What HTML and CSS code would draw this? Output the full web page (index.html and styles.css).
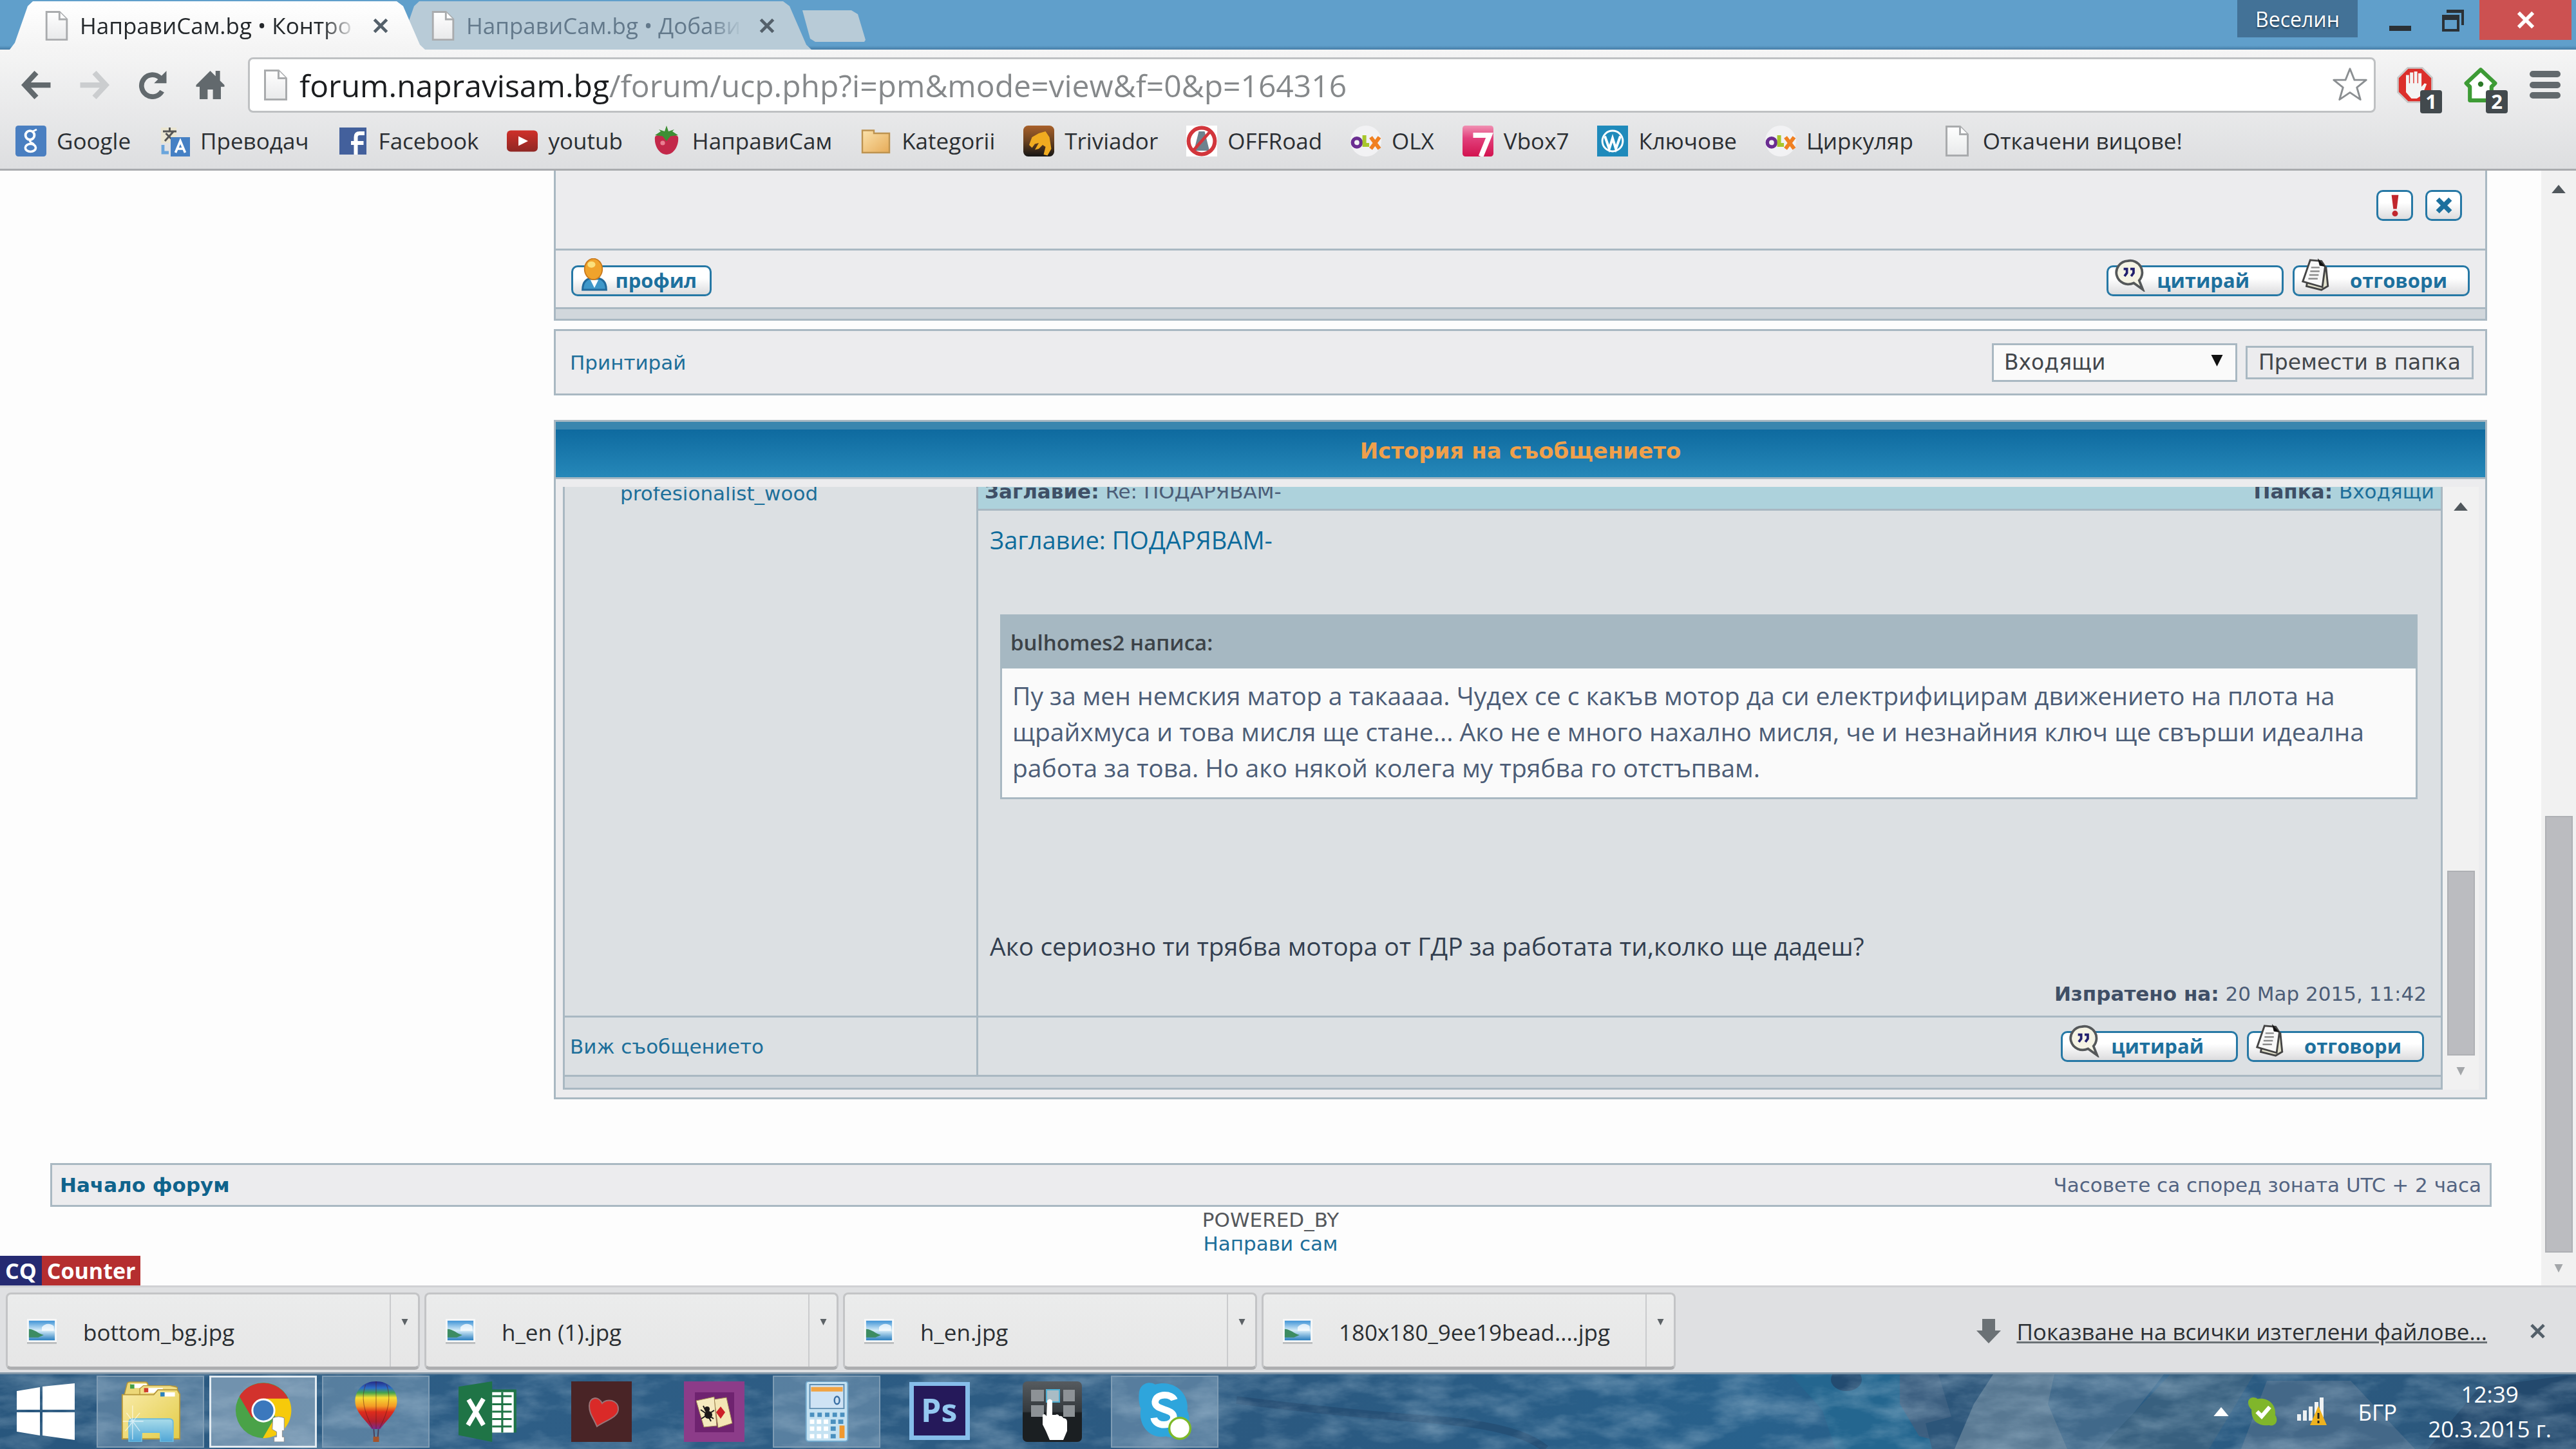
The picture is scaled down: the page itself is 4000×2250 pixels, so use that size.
FILE: index.html
```html
<!DOCTYPE html>
<html lang="bg">
  <head>
    <meta charset="UTF-8" />
    <meta name="viewport" content="width=device-width, initial-scale=1.0" />
    <title>НаправиСам.bg • Контролен панел</title>
    <link rel="stylesheet" href="styles.css">
  </head>
  <body>
    <!-- shared icons -->
    <svg class="defs" width="0" height="0" aria-hidden="true">
      <defs>
        <linearGradient id="gPaper" x1="0" y1="0" x2="0" y2="1"><stop offset="0" stop-color="#fff" /><stop offset="1" stop-color="#e8e9ea" /></linearGradient>
        <linearGradient id="gSky" x1="0" y1="0" x2="0" y2="1"><stop offset="0" stop-color="#3f93d6" /><stop offset="0.5" stop-color="#d5ecf8" /><stop offset="1" stop-color="#2a7fc0" /></linearGradient>
        <linearGradient id="gFolder" x1="0" y1="0" x2="1" y2="1"><stop offset="0" stop-color="#fbe2ab" /><stop offset="1" stop-color="#e6ab58" /></linearGradient>
        <linearGradient id="gYellow" x1="0" y1="0" x2="1" y2="1"><stop offset="0" stop-color="#f9ebaa" /><stop offset="1" stop-color="#e3cc47" /></linearGradient>
        <linearGradient id="gGlass" x1="0" y1="0" x2="0" y2="1"><stop offset="0" stop-color="#a9dcea" /><stop offset="1" stop-color="#4fa5d6" /></linearGradient>
        <linearGradient id="gBalloon" x1="0" y1="0" x2="0" y2="1"><stop offset="0" stop-color="#232a86" /><stop offset="0.14" stop-color="#2c6cc4" /><stop offset="0.24" stop-color="#46a34b" /><stop offset="0.34" stop-color="#f6dd35" /><stop offset="0.52" stop-color="#f39a25" /><stop offset="0.64" stop-color="#dd2c1c" /><stop offset="0.84" stop-color="#b3202f" /><stop offset="1" stop-color="#7a2a91" /></linearGradient>
        <linearGradient id="gVbox" x1="0" y1="0" x2="0" y2="1"><stop offset="0" stop-color="#f091b3" /><stop offset="0.4" stop-color="#e2407c" /><stop offset="1" stop-color="#d2134f" /></linearGradient>
        <linearGradient id="gTriv" x1="0" y1="0" x2="0" y2="1"><stop offset="0" stop-color="#a8602a" /><stop offset="0.5" stop-color="#6b4321" /><stop offset="1" stop-color="#151515" /></linearGradient>
        <linearGradient id="gTube" x1="0" y1="0" x2="0" y2="1"><stop offset="0" stop-color="#cf3029" /><stop offset="1" stop-color="#8f2724" /></linearGradient>
        <linearGradient id="gKeys" x1="0" y1="0" x2="0" y2="1"><stop offset="0" stop-color="#565b5f" /><stop offset="0.5" stop-color="#33383c" /><stop offset="0.52" stop-color="#1b1f22" /><stop offset="1" stop-color="#1b1f22" /></linearGradient>
      </defs>
      <symbol id="i-page" viewBox="0 0 12 16"><path d="M.5.5h7l4 4v11H.5z" fill="url(#gPaper)" stroke="#a9abad" /><path d="M7.5.5v4h4" fill="#fff" stroke="#a9abad" /></symbol>
      <symbol id="i-photo" viewBox="0 0 16 14"><path d="M0 0h16v13.5H0z" fill="#b9bbbd" /><path d="M0 0h16v12.6H0z" fill="#f7f8f8" /><path d="M1 1h14v10.6H1z" fill="url(#gSky)" /><path d="M1 5.5c3 0 5 2.500 8 3.200L6 10H1z" fill="#3d8c62" /><path d="M8 4.500c2-2.500 5-2 6.500-.5v2.500H8z" fill="#fff" opacity=".75" /></symbol>
      <symbol id="i-x" viewBox="0 0 10 10"><path d="M1 1l8 8M9 1L1 9" stroke="currentColor" stroke-width="2" fill="none" /></symbol>
      <symbol id="i-down" viewBox="0 0 10 10"><path d="M0 0h10L5 10z" fill="currentColor" /></symbol>
      <symbol id="i-up" viewBox="0 0 10 6"><path d="M0 6h10L5 0z" fill="currentColor" /></symbol>
      <symbol id="i-olx" viewBox="0 0 16 16"><circle cx="8" cy="8" r="8" fill="#f2f2f4" /><circle cx="3.300" cy="8.800" r="2.200" fill="none" stroke="#6a2d91" stroke-width="1.800" /><path d="M7.200 5v5h2.500" fill="none" stroke="#a8c62c" stroke-width="2" /><path d="M10.500 6l4.500 6M15 6l-4.500 6" stroke="#f08021" stroke-width="2" /></symbol>
      <symbol id="i-quote" viewBox="0 0 16 16"><path d="M7 1a6 5.800 0 1 0 3 11l4.500 3.200-1.800-4.500A5.900 5.900 0 0 0 7 1z" fill="#f5f3e4" stroke="#55585a" stroke-width="1.200" /><path d="M5 5h1.600v2L5.400 8.600M8.300 5h1.600v2L8.700 8.600" fill="none" stroke="#22206e" stroke-width="1.200" /></symbol>
      <symbol id="i-reply" viewBox="0 0 16 18"><path d="M5 3.500l8.500 1.500 1 10-3.500 2-8-2z" fill="#e3e2cd" stroke="#444" stroke-width="1" /><path d="M5 1l6 .5 2 3-1.500 11L1 12.500z" fill="#f8f8f8" stroke="#444" stroke-width="1" /><path d="M9 0l4 4.500-3-.5z" fill="#111" /><path d="M5.500 5h4.500M5 7h5M4.500 9h5M4 11h5" stroke="#8b8b8b" stroke-width=".8" /></symbol>
      <symbol id="i-user" viewBox="0 0 12 17"><path d="M0 16c0-4 2-6 6-6s6 2 6 6z" fill="#3f97c9" stroke="#226a9c" /><path d="M4 11l2 4 2-4z" fill="#fff" /><ellipse cx="5.500" cy="5.500" rx="4.500" ry="5.300" fill="#f0a32c" stroke="#c9791d" stroke-width=".6" /><ellipse cx="4.500" cy="3.200" rx="2" ry="1.600" fill="#fbe07c" /></symbol>
    </svg>

    <header class="titlebar">
      <nav class="tabs">
        <div class="tab tab-active">
          <svg class="tab-icon"><use href="#i-page" /></svg>
          <span class="tab-title">НаправиСам.bg • Контро</span>
          <button class="tab-close" aria-label="Затвори"><svg><use href="#i-x" /></svg></button>
        </div>
        <div class="tab">
          <svg class="tab-icon"><use href="#i-page" /></svg>
          <span class="tab-title">НаправиСам.bg • Добави</span>
          <button class="tab-close" aria-label="Затвори"><svg><use href="#i-x" /></svg></button>
        </div>
        <button class="new-tab" aria-label="Нов раздел"></button>
      </nav>
      <div class="window-controls">
        <button class="user-tag">Веселин</button>
        <button class="win-btn" aria-label="Минимизиране"><svg viewBox="0 0 36 36"><path d="M1 26h34v8H1z" fill="#2b3136" /></svg></button>
        <button class="win-btn" aria-label="Възстановяване"><svg viewBox="0 0 36 36"><path d="M8 1h27v24h-4V6H8z" fill="#2b3136" /><path d="M1 9h27v26H1zM5 17v14h19V17z" fill="#2b3136" fill-rule="evenodd" /></svg></button>
        <button class="win-close" aria-label="Затваряне"><svg><use href="#i-x" /></svg></button>
      </div>
    </header>

    <div class="toolbar">
      <div class="nav-row">
        <button class="nav-btn" aria-label="Назад"><svg viewBox="0 0 18 16"><path d="M9 1L2.500 8 9 15M3 8h14" fill="none" stroke="#62696d" stroke-width="3" /></svg></button>
        <button class="nav-btn" aria-label="Напред"><svg viewBox="0 0 18 16"><path d="M9 1l6.500 7L9 15M15 8H1" fill="none" stroke="#cbcdcf" stroke-width="3" /></svg></button>
        <button class="nav-btn" aria-label="Презареждане"><svg viewBox="0 0 18 16"><path d="M14.500 11.500A6.200 6.200 0 1 1 13.500 4" fill="none" stroke="#62696d" stroke-width="2.800" /><path d="M17 0v7h-7z" fill="#62696d" /></svg></button>
        <button class="nav-btn" aria-label="Начало"><svg viewBox="0 0 18 16"><path d="M9 0l3 3V0h2.500v5.500L17 8v1h-2v7h-4.500v-5.500h-3V16H3V9H1V8z" fill="#62696d" /></svg></button>
        <div class="omnibox">
          <svg class="omni-page"><use href="#i-page" /></svg>
          <input class="url" type="text" aria-label="Адрес" value="forum.napravisam.bg/forum/ucp.php?i=pm&amp;mode=view&amp;f=0&amp;p=164316" />
          <button class="star" aria-label="Отметка"><svg viewBox="0 0 20 20"><path d="M10 1.300l2.400 6h6.300l-5 4 1.900 6.500L10 14l-5.600 3.800 1.900-6.500-5-4h6.300z" fill="#fff" stroke="#8b8f92" stroke-width="1" stroke-linejoin="round" /></svg></button>
        </div>
        <button class="ext" aria-label="AdBlock"><svg viewBox="0 0 20 20"><path d="M6 .5h8L19.500 6v8L14 19.500H6L.5 14V6z" fill="#dc2f2b" stroke="#c9c9c9" /><path d="M5 10V4.500h1.700V9h.5V3h1.800v6h.5V2.500h1.800V9h.5V3.500h1.800V11l1.700-2 1.200.5-2.500 6L11 17.500H8L5 14z" fill="#f4f4f4" /></svg><span class="ext-badge">1</span></button>
        <button class="ext" aria-label="Известия"><svg viewBox="0 0 20 20"><path d="M10 1.500L18 9l-2 2v7.500H4V11L2 9z" fill="#fff" stroke="#3d9b35" stroke-width="2.200" stroke-linejoin="round" /><circle cx="10" cy="9.500" r="1.500" fill="#2c7a28" /></svg><span class="ext-badge">2</span></button>
        <button class="menu-btn" aria-label="Меню"><svg viewBox="0 0 48 44"><path d="M5 5h38M5 22h38M5 38h38" stroke="#62696d" stroke-width="10" stroke-linecap="round" /></svg></button>
      </div>

      <nav class="bookmarks">
        <a href="#"><svg viewBox="0 0 16 16"><rect width="16" height="16" rx="1.500" fill="#4a7fc1" /><circle cx="7.500" cy="5" r="2.300" fill="none" stroke="#fff" stroke-width="1.300" /><path d="M9 3l2-1M8 7.500c-1.500 1 1 1.500 1.500 2.200" stroke="#fff" fill="none" /><ellipse cx="7.800" cy="11.500" rx="2.700" ry="2" fill="none" stroke="#fff" stroke-width="1.200" /></svg>Google</a>
        <a href="#"><svg viewBox="0 0 16 16"><path d="M1 1h8v8H1z" fill="#ebe6d2" /><path d="M2 3h7M5.500 1v2M3 8l4.500-5M3.500 4l4 4" stroke="#555" fill="none" /><path d="M6 6h10v10H6z" fill="#4580c4" /><path d="M8.500 14L11 8l2.500 6M9.500 12h3" stroke="#fff" fill="none" stroke-width="1.200" /><path d="M2 10v4h3" stroke="#6aa5dc" fill="none" stroke-width="1.600" /></svg>Преводач</a>
        <a href="#"><svg viewBox="0 0 16 16"><path d="M1 1h14v14H1z" fill="#43609c" /><path d="M9.500 15V6q0-2 2-2H14M7 9h6.500" stroke="#fff" stroke-width="2" fill="none" /></svg>Facebook</a>
        <a href="#"><svg viewBox="0 0 16 16"><rect y="2.500" width="16" height="11" rx="2" fill="url(#gTube)" /><path d="M6 5.500l5 2.500-5 2.500z" fill="#fff" /></svg>youtub</a>
        <a href="#"><svg viewBox="0 0 16 16"><path d="M2 6c0-2 12-2 12 0 .5 4-2 9-6 9S1.500 10 2 6z" fill="#c3284a" /><path d="M2 5l3-2-1-1 3 1 1-3 1 3 3-1-1 1 3 2-4 .5L8 8 6 5.500z" fill="#3d8f34" /><circle cx="6" cy="9" r="1.200" fill="#ea7f92" /></svg>НаправиСам</a>
        <a href="#"><svg viewBox="0 0 16 16"><path d="M1 4V2.500h6V4h8v10H1z" fill="url(#gFolder)" stroke="#bd9350" stroke-width=".8" /></svg>Kategorii</a>
        <a href="#"><svg viewBox="0 0 16 16"><rect width="16" height="16" rx="2.500" fill="url(#gTriv)" /><path d="M3 10l1.500-4L8 4l3.500-1 2 3 1 6-2 3.500-2-.5 1-4-1.500-1-2 2-2 .5L8 9l-2 .5-1.500 2z" fill="#f0ab20" /></svg>Triviador</a>
        <a href="#"><svg viewBox="0 0 16 16"><path d="M0 0h16v16H0z" fill="#fff" /><path d="M6.500 3h3L12 13H4z" fill="#6d828e" /><circle cx="8" cy="8" r="6.800" fill="none" stroke="#d2363c" stroke-width="2" /><path d="M12 3.500l-8 9" stroke="#d2363c" stroke-width="1.600" /></svg>OFFRoad</a>
        <a href="#"><svg><use href="#i-olx" /></svg>OLX</a>
        <a href="#"><svg viewBox="0 0 16 16"><rect width="16" height="16" rx="1.500" fill="url(#gVbox)" /><path d="M5.500 5H14l-4.500 11" fill="none" stroke="#fff" stroke-width="2.600" /></svg>Vbox7</a>
        <a href="#"><svg viewBox="0 0 16 16"><path d="M0 0h16v16H0z" fill="#1f8abb" /><circle cx="8" cy="8" r="5.300" fill="none" stroke="#fff" stroke-width="1" /><path d="M4 5.500L6.300 12 8 6.500 9.700 12 12 5.500" fill="none" stroke="#fff" stroke-width="1.300" /></svg>Ключове</a>
        <a href="#"><svg><use href="#i-olx" /></svg>Циркуляр</a>
        <a href="#"><svg><use href="#i-page" /></svg>Откачени вицове!</a>
      </nav>
    </div>

    <div class="viewport">
      <main class="page">
        <div class="ucp">
          <section class="post">
            <div class="post-tools">
              <button class="mini-btn report" aria-label="Докладвай"><svg viewBox="0 0 10 20"><path d="M2 1h6L6.500 13h-3z" fill="#c1272d" /><circle cx="5" cy="17" r="2.500" fill="#c1272d" /></svg></button>
              <button class="mini-btn" aria-label="Изтрий"><svg viewBox="0 0 10 10"><path d="M1.500 1.500l7 7M8.500 1.500l-7 7" stroke="#1d709e" stroke-width="2.600" /></svg></button>
            </div>
            <div class="post-actions">
              <button class="img-btn profile"><svg><use href="#i-user" /></svg>профил</button>
              <span class="spacer"></span>
              <button class="img-btn quote"><svg><use href="#i-quote" /></svg>цитирай</button>
              <button class="img-btn"><svg><use href="#i-reply" /></svg>отговори</button>
            </div>
            <div class="strip"></div>
          </section>

          <form class="move-bar">
            <a href="#">Принтирай</a>
            <div class="move-controls">
              <div class="select-wrap">
                <select aria-label="Папка"><option>Входящи</option></select>
                <svg><use href="#i-down" /></svg>
              </div>
              <button class="move-btn" type="button">Премести в папка</button>
            </div>
          </form>

          <section class="history">
            <h2>История на съобщението</h2>
            <div class="history-body">
              <div class="history-scroll">
                <table class="pm">
                  <tr>
                    <td class="author" rowspan="2"><a href="#">profesionalist_wood</a></td>
                    <td class="subject"><div><span><b>Заглавие:</b> Re: ПОДАРЯВАМ-</span><span><b>Папка:</b> <a href="#">Входящи</a></span></div></td>
                  </tr>
                  <tr>
                    <td class="message">
                      <h3>Заглавие: ПОДАРЯВАМ-</h3>
                      <div class="quote-title">bulhomes2 написа:</div>
                      <blockquote>Пу за мен немския матор а такаааа. Чудех се с какъв мотор да си електрифицирам движението на плота на щрайхмуса и това мисля ще стане... Ако не е много нахално мисля, че и незнайния ключ ще свърши идеална работа за това. Но ако някой колега му трябва го отстъпвам.</blockquote>
                      <p>Ако сериозно ти трябва мотора от ГДР за работата ти,колко ще дадеш?</p>
                      <div class="sent"><b>Изпратено на:</b> 20 Мар 2015, 11:42</div>
                    </td>
                  </tr>
                  <tr>
                    <td class="view"><a href="#">Виж съобщението</a></td>
                    <td class="buttons">
                      <div>
                        <button class="img-btn quote"><svg><use href="#i-quote" /></svg>цитирай</button>
                        <button class="img-btn"><svg><use href="#i-reply" /></svg>отговори</button>
                      </div>
                    </td>
                  </tr>
                  <tr><td class="pm-strip" colspan="2"></td></tr>
                </table>
              </div>
              <div class="scrollbar inner">
                <svg class="arrow"><use href="#i-up" /></svg>
                <div class="thumb"></div>
                <svg class="arrow off"><use href="#i-down" /></svg>
              </div>
            </div>
          </section>
        </div>

        <div class="breadcrumb"><a href="#">Начало форум</a><span>Часовете са според зоната UTC + 2 часа</span></div>
        <div class="copyright">POWERED_BY<br /><a href="#">Направи сам</a></div>
        <a class="counter" href="#"><span>CQ</span><span>Counter</span></a>
      </main>
      <div class="scrollbar">
        <svg class="arrow"><use href="#i-up" /></svg>
        <div class="thumb"></div>
        <svg class="arrow off"><use href="#i-down" /></svg>
      </div>
    </div>

    <div class="downloads">
      <div class="download"><button class="file"><svg><use href="#i-photo" /></svg>bottom_bg.jpg</button><button class="file-menu" aria-label="Меню"><svg><use href="#i-down" /></svg></button></div>
      <div class="download"><button class="file"><svg><use href="#i-photo" /></svg>h_en (1).jpg</button><button class="file-menu" aria-label="Меню"><svg><use href="#i-down" /></svg></button></div>
      <div class="download"><button class="file"><svg><use href="#i-photo" /></svg>h_en.jpg</button><button class="file-menu" aria-label="Меню"><svg><use href="#i-down" /></svg></button></div>
      <div class="download"><button class="file"><svg><use href="#i-photo" /></svg>180x180_9ee19bead....jpg</button><button class="file-menu" aria-label="Меню"><svg><use href="#i-down" /></svg></button></div>
      <span class="spacer"></span>
      <a class="show-all" href="#"><svg viewBox="0 0 38 38"><path d="M9 0h20v18h9L19 38 0 18h9z" fill="#6b7175" /></svg><span>Показване на всички изтеглени файлове...</span></a>
      <button class="shelf-close" aria-label="Затвори"><svg><use href="#i-x" /></svg></button>
    </div>

    <footer class="taskbar">
      <!-- rocky wallpaper showing through the bar -->
      <svg class="wallpaper" viewBox="0 0 4000 116" preserveAspectRatio="none" aria-hidden="true">
        <filter id="rock" x="0" y="0" width="100%" height="100%"><feTurbulence type="fractalNoise" baseFrequency="0.012 0.030" numOctaves="5" seed="8" /><feColorMatrix values="0 0 0 0 0.45  0 0 0 0 0.6  0 0 0 0 0.72  1.600 0 0 0 -0.620" /></filter>
        <path d="M2780 0h240l30 50 20 66h-220l-20-60z" fill="#24668f" />
        <path d="M2950 0h60l30 50 20 66-80-20-30-50z" fill="#3c5f80" />
        <ellipse cx="2867" cy="8" rx="24" ry="18" fill="#234b70" />
        <path d="M3010 0h85l-30 60-5 56h-60l-10-40 40-10z" fill="#2c5579" />
        <path d="M3095 0h100l-10 50 40 66h-190l30-70z" fill="#587892" />
        <path d="M3190 0h170l-90 116h-60l-30-70z" fill="#41698a" />
        <path d="M3370 0h130l-70 116h-170z" fill="#38607f" />
        <path d="M3520 10l130 0 100 106h-270z" fill="#446888" />
        <path d="M3850 20l150-20v116h-230z" fill="#23496d" />
        <path d="M1920 40q160 20 300 30t180 46" fill="none" stroke="#23486c" stroke-width="12" opacity=".6" />
        <rect width="4000" height="116" filter="url(#rock)" opacity=".5" />
      </svg>
      <button class="task start" aria-label="Старт"><svg viewBox="0 0 90 88"><path d="M0 12l36-6v35H0zM40 5l50-5v41H40zM0 45h36v36L0 75zM40 45h50v43l-50-7z" fill="#fff" /></svg></button>
      <button class="task open" aria-label="Файлове"><svg viewBox="0 0 96 100"><path d="M5 20l4-16q1-3 4-3h26q3 0 4 3l2 4h44v30H5z" fill="#ecd777" stroke="#b59639" stroke-width="1.500" /><path d="M16 4h25l2 7H14z" fill="#fff" /><path d="M14 5h7v7h-7z" fill="#44a048" /><path d="M30 12l6-5h44l12 3v30H30z" fill="#f0dd85" stroke="#b59639" stroke-width="1.500" /><path d="M42 11h26v8H40z" fill="#fff" /><path d="M37 11h7v7h-7z" fill="#cf3c2c" /><path d="M1 22h52l7-8h32l4 7v74H1z" fill="url(#gYellow)" stroke="#b59639" stroke-width="2" /><path d="M70 18h18v7H68z" fill="#fff" /><path d="M64 18h7v7h-7z" fill="#2c82bd" /><path d="M12 100V68q0-6 6-6h61q6 0 6 6v32H64V84H33v16z" fill="url(#gGlass)" stroke="#6bbbe0" stroke-width="2" /><path d="M18 40v56M2 66h34M8 52l22 30M30 52L6 82" stroke="#fff" stroke-width="1.500" opacity=".6" /></svg></button>
      <button class="task open active" aria-label="Chrome"><svg viewBox="0 0 96 96"><circle cx="48" cy="46" r="44" fill="#4aa248" /><path d="M48 46L10 24A44 44 0 0 1 87 27z" fill="#d2322d" /><path d="M48 27h40A44 44 0 0 1 47 90l20-34z" fill="#f6ca0b" /><path d="M10 24A44 44 0 0 1 87 27H48L30 58z" fill="#d2322d" /><circle cx="48" cy="46" r="19" fill="#fff" /><circle cx="48" cy="46" r="16" fill="#3b78bd" /><path d="M63 58q9-4 18 0v20h-3v10h3v8H65v-8h4V80l-7-4z" fill="#fdfdfd" stroke="#8c8c8c" stroke-width="1" /></svg></button>
      <button class="task open" aria-label="Балон"><svg viewBox="0 0 96 104"><path d="M48 0c22 0 36 15 36 34 0 20-20 34-29 48H41C32 68 12 54 12 34 12 15 26 0 48 0z" fill="url(#gBalloon)" /><path d="M30 6q-12 30 12 74M48 0v82M66 6q12 30-12 74" fill="none" stroke="#5b1c14" stroke-width="1.200" opacity=".5" /><path d="M44 82l1 14M52 82l-1 14" stroke="#4a3a55" stroke-width="2" /><path d="M43 95h10v9H43z" fill="#a5532b" /></svg></button>
      <button class="task" aria-label="Excel"><svg viewBox="0 0 90 90"><path d="M48 12h38v64H48z" fill="#1f7446" /><path d="M48 16h34v60H48z" fill="#fff" /><path d="M50 22h29M50 34h29M50 45h29M50 56h29M50 67h29M65 16v60" stroke="#1f7446" stroke-width="3" /><path d="M0 8l50-8v90L0 80z" fill="#1f7446" /><path d="M15 27l22 38M37 26L14 65" stroke="#fff" stroke-width="7" /></svg></button>
      <button class="task" aria-label="Hearts"><svg viewBox="0 0 94 94"><path d="M0 0h94v94H0z" fill="#492426" /><path d="M40 70C34 56 28 50 28 38c0-14 14-16 20-4 6-8 26-6 25 10-1 12-18 16-33 26z" fill="#da2a28" stroke="#9a7477" stroke-width="2" /></svg></button>
      <button class="task" aria-label="Spider"><svg viewBox="0 0 94 94"><path d="M0 0h94v94H0z" fill="#8c3c89" /><path d="M17 17h61v62H17z" fill="#6f2370" /><path d="M47 28l19-3 9 40-22 7z" fill="#f3e6b4" stroke="#9f8451" /><path d="M19 30l28-6 4 45-20 2z" fill="#f5eabf" stroke="#9f8451" /><circle cx="38" cy="52" r="6" fill="#1c1818" /><circle cx="36" cy="43" r="4" fill="#1c1818" /><path d="M26 44l20 14M27 58l20-13M30 38l12 24" stroke="#1c1818" stroke-width="2" /><path d="M57 39l7 9-7 10-7-10z" fill="#cd2027" /></svg></button>
      <button class="task open" aria-label="Калкулатор"><svg viewBox="0 0 96 96"><rect x="15" y="0" width="66" height="95" rx="4" fill="#c5e2f2" stroke="#73a9cc" stroke-width="2" /><path d="M21 5h54v38H21z" fill="#cfe3f4" stroke="#5e8db1" stroke-width="2" /><path d="M23 9h50v7H23z" fill="#f0a343" /><ellipse cx="64" cy="30" rx="4" ry="6" fill="none" stroke="#3a6fa4" stroke-width="2.500" /><path d="M21 53h55" stroke="#4a90bf" stroke-width="7" stroke-dasharray="7 5" /><path d="M21 64h30M21 75h30M21 87h30" stroke="#fff" stroke-width="7" stroke-dasharray="7 4" /><path d="M54 64h22M54 75h10M54 87h10" stroke="#4a90bf" stroke-width="7" stroke-dasharray="8 4" /><path d="M68 70h8v20h-8z" fill="#f0982f" /></svg></button>
      <button class="task" aria-label="Photoshop"><svg viewBox="0 0 94 92"><path d="M0 0h94v90H0z" fill="#86bdea" /><path d="M7 6h80v77H7z" fill="#25195a" /><text class="ps" x="18" y="62">Ps</text></svg></button>
      <button class="task" aria-label="Touchpad"><svg viewBox="0 0 92 94"><rect width="92" height="94" rx="7" fill="url(#gKeys)" /><path d="M13 13h20v18H13zM63 13h18v18H63zM13 37h20v18H13zM63 37h18v18H63z" fill="#8d9296" /><path d="M37 13h20v19H37z" fill="#a9bcc5" stroke="#4fb0d4" stroke-width="2" /><path d="M38 30q4-5 8 0v22h5q4-2 6 2 4-1 6 3 6 0 6 6v14l-6 14H42l-6-14-5-10v-15q3-3 6 2z" fill="#fff" /></svg></button>
      <button class="task open" aria-label="Skype"><svg viewBox="0 0 96 98"><path d="M6 20C6 6 20-2 32 5c30-9 56 14 52 42 12 26-12 50-34 42C22 94 4 70 9 44 6 38 5 28 6 20z" fill="#2ea5dc" /><path d="M63 30C60 20 34 18 32 33c-1 15 30 10 30 25 0 16-30 16-32 1" fill="none" stroke="#fff" stroke-width="11" /><circle cx="72" cy="76" r="17" fill="#fff" stroke="#7db928" stroke-width="3.500" /></svg></button>
      <span class="spacer"></span>
      <div class="tray">
        <svg class="tray-up"><use href="#i-up" /></svg>
        <svg class="tray-icon" viewBox="0 0 44 44"><path d="M0 8C0 1 9-1 14 3c16-3 28 9 26 24 6 8 0 18-9 15C16 44 4 36 5 19 1 15 0 12 0 8z" fill="#80b62b" /><path d="M13 22l7 7 12-14" fill="none" stroke="#fff" stroke-width="6" /></svg>
        <svg class="tray-icon" viewBox="0 0 46 44"><path d="M0 26h6v10H0zM9 20h6v16H9zM18 14h6v22h-6zM27 7h6v29h-6zM35 0h6v34h-6z" fill="#eef1f3" /><path d="M33 13L46 43H20z" fill="#eeb21f" /><path d="M33 24v9M33 36v4" stroke="#222" stroke-width="3" /></svg>
        <span>БГР</span>
        <time class="clock">12:39<br />20.3.2015 г.</time>
      </div>
    </footer>
  </body>
</html>
```
FILE: styles.css
```css
* {
  box-sizing: border-box;
}

body {
  margin: 0;
  min-height: 100vh;
  display: flex;
  flex-direction: column;
  overflow: hidden;
  background: #fdfdfd;
  font-family: "DejaVu Sans", Verdana, sans-serif;
  font-size: 31px;
  color: #536482;
}

button {
  border: none;
  background: none;
  padding: 0;
  font: inherit;
  color: inherit;
}

svg {
  display: block;
  flex: none;
}

a {
  color: #1d6f9a;
  text-decoration: none;
}

.defs {
  position: absolute;
}

.spacer {
  flex: 1;
}

/* window frame and tabs */
.titlebar {
  height: 77px;
  display: flex;
  justify-content: space-between;
  background: linear-gradient(#609fcb 92%, #457ca6);
  font-family: "Open Sans", "Segoe UI", sans-serif;
  font-size: 35px;
}

.tabs {
  display: flex;
  padding: 2px 0 0 15px;
}

.tab {
  width: 645px;
  height: 75px;
  margin-right: -45px;
  padding: 0 57px 0 55px;
  display: flex;
  align-items: center;
  background: #b8cbd7;
  color: #63798b;
  clip-path: polygon(0 100%, 8px 86%, 28px 10%, 36px 0, calc(100% - 44px) 0, calc(100% - 34px) 10%, calc(100% - 8px) 90%, 100% 100%);
}

.tab-active {
  z-index: 1;
  background: linear-gradient(#fff, #f4f4f4);
  color: #24282b;
}

.tab-icon {
  width: 36px;
  height: 46px;
}

.tab-title {
  flex: 1;
  margin: 0 26px 0 18px;
  white-space: nowrap;
  overflow: hidden;
  mask-image: linear-gradient(90deg, #000 88%, transparent);
}

.tab-close svg {
  width: 24px;
  height: 24px;
  color: #54606a;
}

.new-tab {
  width: 98px;
  height: 49px;
  margin: 14px 0 0 31px;
  background: #b8cbd7;
  clip-path: polygon(0 0, 76px 0, 86px 12%, 100% 94%, 96px 100%, 20px 100%, 12px 90%);
}

.window-controls {
  display: flex;
  align-items: flex-start;
  padding-right: 7px;
}

.user-tag {
  width: 187px;
  height: 58px;
  margin-right: 25px;
  background: #437297;
  color: #fff;
  font-size: 32px;
  text-shadow: 0 2px 3px #1c3347;
}

.win-btn {
  padding: 14px 23px;
}

.win-btn svg {
  width: 36px;
  height: 36px;
}

.win-close {
  width: 143px;
  height: 62px;
  background: #cc5151;
  color: #fff;
}

.win-close svg {
  width: 30px;
  height: 28px;
  margin: auto;
}

/* address bar */
.toolbar {
  background: linear-gradient(#f5f5f5, #dddee0);
  border-bottom: 3px solid #a9abae;
  padding-top: 12px;
  font-family: "Open Sans", "Segoe UI", sans-serif;
}

.nav-row {
  display: flex;
  align-items: center;
  padding: 0 22px 0 31px;
}

.nav-btn {
  margin-right: 39px;
}

.nav-btn svg {
  width: 51px;
  height: 44px;
}

.omnibox {
  flex: 1;
  height: 86px;
  margin: 0 33px 0 -6px;
  padding: 0 8px 0 21px;
  display: flex;
  align-items: center;
  background: #fff;
  border: 3px solid #bfc1c3;
  border-radius: 8px;
}

.omni-page {
  width: 38px;
  height: 48px;
}

/* host part is dark, the rest of the address is grey */
.url {
  flex: 1;
  margin-left: 18px;
  padding: 0;
  border: none;
  font: inherit;
  font-size: 48px;
  background: linear-gradient(90deg, #1b1d1f 481px, #85888a 481px);
  background-clip: text;
  -webkit-background-clip: text;
  color: transparent;
}

.star svg {
  width: 58px;
  height: 58px;
}

.ext {
  position: relative;
  margin-right: 46px;
}

.ext svg {
  width: 56px;
  height: 58px;
}

.ext-badge {
  position: absolute;
  left: 36px;
  top: 37px;
  width: 34px;
  height: 36px;
  border-radius: 4px;
  background: #42494d;
  color: #fff;
  font-size: 31px;
  font-weight: bold;
  line-height: 35px;
}

.menu-btn svg {
  width: 52px;
  height: 44px;
}

.bookmarks {
  display: flex;
  gap: 43px;
  height: 87px;
  padding: 0 23px;
}

.bookmarks a {
  display: flex;
  align-items: center;
  gap: 15px;
  font-size: 35px;
  color: #2b2f33;
  white-space: nowrap;
}

.bookmarks svg {
  width: 50px;
  height: 48px;
}

/* page area */
.viewport {
  flex: 1;
  display: flex;
  overflow: hidden;
}

.page {
  flex: 1;
  display: flex;
  flex-direction: column;
}

.scrollbar {
  width: 54px;
  display: flex;
  flex-direction: column;
  align-items: center;
  padding: 22px 0 20px;
  background: #f1f1f1;
}

.scrollbar .arrow {
  width: 22px;
  height: 13px;
  color: #50575c;
}

.scrollbar .arrow.off {
  color: #a3a6a9;
}

.scrollbar .thumb {
  width: 43px;
  height: 678px;
  margin: auto 0 18px;
  background: #bbbcc0;
  border: 2px solid #aeb0b4;
}

.ucp {
  margin: 0 84px 0 860px;
}

.post,
.move-bar,
.history {
  border: 3px solid #a9b8c2;
  background: #ececee;
}

.post {
  border-top: none;
}

.post-tools {
  display: flex;
  justify-content: flex-end;
  gap: 19px;
  height: 124px;
  padding: 30px 36px 0 0;
  border-bottom: 3px solid #a9b8c2;
}

.mini-btn,
.img-btn {
  height: 48px;
  border: 3px solid #2678a5;
  border-radius: 10px;
  background: linear-gradient(#fff 40%, #dcdcde);
}

.mini-btn {
  width: 57px;
}

.mini-btn svg {
  width: 30px;
  height: 28px;
  margin: auto;
}

.report svg {
  width: 18px;
  height: 36px;
}

.post-actions,
.buttons div {
  display: flex;
  align-items: center;
  gap: 14px;
}

.post-actions {
  height: 88px;
  padding: 6px 24px 0;
}

.img-btn {
  position: relative;
  width: 275px;
  padding: 0 32px 2px 0;
  text-align: right;
  font: bold 31px "Open Sans", "Trebuchet MS", sans-serif;
  line-height: 38px;
  color: #1d709e;
}

.img-btn svg {
  position: absolute;
  left: 8px;
  top: -14px;
  width: 50px;
  height: 52px;
}

.quote {
  padding-right: 50px;
}

.profile {
  width: 218px;
  padding-right: 20px;
}

.strip {
  height: 18px;
  background: #d1d7dc;
  border-top: 3px solid #a9b8c2;
}

.move-bar {
  display: flex;
  align-items: center;
  justify-content: space-between;
  height: 103px;
  margin: 13px 0 38px;
  padding: 0 18px 0 22px;
}

.move-controls {
  display: flex;
  align-items: center;
  gap: 13px;
  font-size: 33px;
}

.select-wrap {
  position: relative;
}

.select-wrap svg {
  position: absolute;
  right: 22px;
  top: 18px;
  width: 19px;
  height: 18px;
  color: #111;
}

select {
  appearance: none;
  width: 381px;
  height: 60px;
  padding: 0 16px;
  border: 3px solid #a9b8c2;
  background: #fafafa;
  font: inherit;
  color: #42474c;
}

.move-btn {
  height: 52px;
  padding: 0 17px;
  border: 3px solid #a9b8c2;
  color: #42474c;
}

/* message history */
.history h2 {
  margin: 0;
  height: 89px;
  border-bottom: 3px solid #a9b8c2;
  background: linear-gradient(#3a86ae 12px, #0e6a9f 12px, #2688b9);
  color: #f0a04b;
  font-size: 34px;
  line-height: 90px;
  text-align: center;
}

.history-body {
  display: flex;
  height: 960px;
  padding: 12px 10px 12px 11px;
}

/* scrolled to the last message, the top of it is cut off */
.history-scroll {
  flex: 1;
  display: flex;
  align-items: flex-end;
  overflow: hidden;
}

.pm {
  width: 100%;
  border-spacing: 0;
  border-left: 3px solid #a9b8c2;
  background: #dce0e3;
  color: #4c5d77;
}

.pm td {
  padding: 0;
  border-right: 3px solid #a9b8c2;
  border-bottom: 3px solid #a9b8c2;
}

.pm b {
  color: #3f4f66;
}

.pm .author {
  width: 642px;
  padding: 10px 0 0 86px;
  vertical-align: top;
  line-height: 40px;
}

.pm .subject {
  padding: 0 10px;
  background: #add2dc;
}

.subject div {
  display: flex;
  justify-content: space-between;
  line-height: 54px;
}

.pm .message {
  padding: 17px 22px 14px 18px;
  font-family: "Open Sans", "Trebuchet MS", sans-serif;
  font-size: 39px;
  font-weight: 500;
  line-height: 56px;
}

.message h3 {
  margin: 0 0 88px;
  font-size: 38px;
  font-weight: 500;
  color: #0d6b9b;
}

.quote-title {
  margin: 0 14px 0 16px;
  padding: 4px 16px 0;
  background: #a6b8c2;
  color: #3c4247;
  font-size: 33px;
  font-weight: 600;
  line-height: 80px;
}

.message blockquote {
  margin: 0 14px 200px 16px;
  padding: 14px 16px 18px;
  border: 3px solid #a9b8c2;
  border-top: none;
  background: #fafafa;
}

.message p {
  margin: 0 0 26px;
  color: #333f50;
}

.sent {
  font: 31px "DejaVu Sans", Verdana, sans-serif;
  line-height: 40px;
  text-align: right;
}

.pm .view {
  height: 92px;
  padding-left: 8px;
}

.pm .buttons div {
  justify-content: flex-end;
  padding-right: 26px;
}

.pm .pm-strip {
  height: 20px;
  background: #d1d7dc;
}

.inner {
  width: 56px;
  padding: 24px 0 22px;
}

.inner .thumb {
  height: 287px;
}

.breadcrumb {
  display: flex;
  justify-content: space-between;
  height: 68px;
  margin: 99px 77px 2px 78px;
  padding: 0 13px 0 12px;
  border: 3px solid #a9b8c2;
  background: #ececee;
  line-height: 62px;
}

.breadcrumb a {
  font-weight: bold;
  color: #0f638c;
}

.copyright {
  text-align: center;
  line-height: 37px;
  color: #55585c;
}

.counter {
  display: flex;
  align-self: flex-start;
  margin-top: auto;
  background: #b52e2f;
  color: #fff;
  font: bold 34px "Open Sans", "Trebuchet MS", sans-serif;
  line-height: 46px;
}

.counter span {
  padding: 0 8px;
}

.counter span:first-child {
  background: #252a72;
}

/* downloads shelf */
.downloads {
  display: flex;
  align-items: center;
  gap: 7px;
  height: 138px;
  padding: 4px 47px 0 9px;
  background: #dfe0e2;
  border-top: 3px solid #d0d1d4;
  border-bottom: 3px solid #8296a7;
  font-family: "Open Sans", "Segoe UI", sans-serif;
  font-size: 35px;
  color: #2b2f33;
}

.download {
  display: flex;
  width: 643px;
  height: 120px;
  border: 3px solid #c3c4c6;
  border-bottom: 5px solid #adaeb0;
  border-radius: 8px;
  background: linear-gradient(#ebecec, #e6e6e6);
}

.file {
  flex: 1;
  display: flex;
  align-items: center;
  gap: 41px;
  padding: 4px 0 0 30px;
}

.file svg {
  width: 46px;
  height: 42px;
}

.file-menu {
  width: 44px;
  padding-bottom: 26px;
  border-left: 2px solid #cacbcd;
}

.file-menu svg {
  width: 15px;
  height: 10px;
  margin: auto;
  color: #5c6266;
}

.show-all {
  display: flex;
  align-items: center;
  gap: 24px;
  color: #2b2f33;
}

.show-all span {
  text-decoration: underline;
  text-decoration-color: #6b7175;
}

.show-all svg {
  width: 38px;
  height: 38px;
}

.shelf-close {
  margin-left: 59px;
}

.shelf-close svg {
  width: 25px;
  height: 24px;
  color: #54606a;
}

/* taskbar */
.taskbar {
  position: relative;
  display: flex;
  align-items: center;
  gap: 8px;
  height: 116px;
  background: linear-gradient(90deg, #28567d, #2e5e86 20%, #2b5980 50%, #28618c 68%, #2c567a);
  color: #fff;
  font-family: "Open Sans", "Segoe UI", sans-serif;
  font-size: 35px;
}

.wallpaper {
  position: absolute;
  width: 100%;
  height: 100%;
}

.task {
  position: relative;
  width: 167px;
  height: 112px;
}

.task svg {
  height: 94px;
  width: 94px;
  margin: auto;
}

.start {
  width: 142px;
}

.start svg {
  height: 88px;
}

.open {
  border: 2px solid #7f9cb4;
  background: rgba(190, 210, 225, 0.3);
}

.active {
  border: 3px solid #e3ebf1;
  background: rgba(200, 215, 228, 0.45);
}

.ps {
  font: bold 50px "Open Sans", sans-serif;
  fill: #94c8f0;
}

.tray {
  position: relative;
  display: flex;
  align-items: center;
  gap: 30px;
  padding-right: 38px;
}

.tray-up {
  width: 24px;
  height: 14px;
}

.tray-icon {
  width: 46px;
  height: 46px;
}

.tray span {
  margin-left: 18px;
}

.clock {
  margin-left: 18px;
  text-align: center;
  line-height: 54px;
}
```
